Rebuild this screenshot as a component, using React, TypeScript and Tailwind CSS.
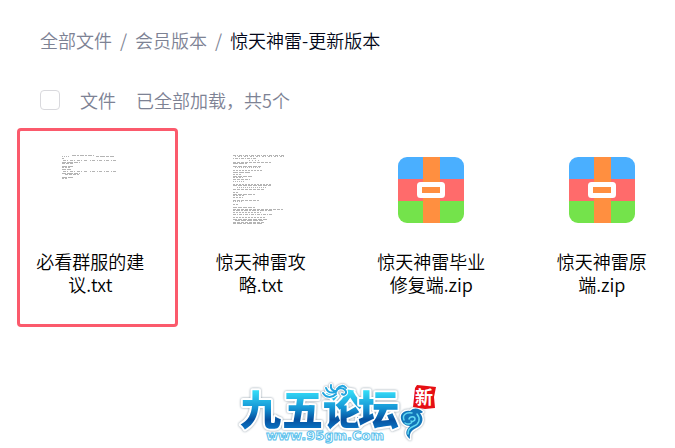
import { useId } from "react";

type Line = [x: number, y: number, width: number, dash: string];

type FileEntry = {
  name: string;
  kind: "txt" | "zip";
  lines?: Line[];
  highlighted?: boolean;
};

const shortNote: Line[] = [
  [0, 2, 8, "1 1"], [10, 1, 22, "4 1 2 1"], [34, 2, 18, "3 1 5 1"],
  [0, 4, 3, "2 1"],
  [1, 6, 24, "3 1 1 2"], [28, 6, 28, "1 1 3 2"],
  [0, 8, 18, "4 1 6 1"], [0, 9, 12, "3 1"],
  [0, 12, 11, "5 1"], [0, 13, 8, "2 1"], [0, 15, 9, "4 1"],
  [1, 17, 24, "3 1 1 2"], [28, 17, 28, "1 1 3 2"],
  [0, 19, 18, "4 1 6 1"], [3, 20, 14, "3 1"],
  [0, 23, 11, "5 1"], [0, 24, 6, "2 1"]
];

const guide: Line[] = [
  [0, 1, 51, "3 1 1 1"], [2, 2, 50, "1 2 2 1"], [0, 4, 24, "1 1 3 1"], [16, 6, 10, "1 2"],
  [0, 8, 38, "3 1"], [0, 9, 14, "5 1"], [0, 12, 28, "4 1"], [2, 13, 26, "1 1"],
  [0, 16, 30, "2 1"], [0, 18, 18, "5 1"], [0, 20, 9, "2 1"],
  [0, 22, 20, "4 1"], [0, 23, 10, "2 1"], [0, 25, 17, "3 1"], [0, 27, 12, "1 1"],
  [0, 30, 38, "2 1"], [0, 31, 38, "4 1"], [4, 33, 30, "1 1"], [0, 35, 32, "3 1"],
  [0, 38, 5, "2 1"], [0, 40, 22, "4 1"], [0, 41, 12, "2 1"], [0, 43, 10, "2 1"],
  [0, 46, 26, "3 1"], [0, 47, 10, "1 1"], [0, 50, 6, "2 1"],
  [0, 53, 22, "4 1"], [0, 55, 50, "3 1"], [0, 56, 40, "2 1 4 1"], [0, 58, 28, "2 1"],
  [0, 60, 40, "3 1 1 1"], [0, 63, 32, "2 1"], [0, 65, 34, "4 1"], [2, 66, 28, "5 1"],
  [0, 68, 32, "3 1"], [0, 69, 30, "3 1 5 1"]
];

const files: FileEntry[] = [
  { name: "必看群服的建议.txt", kind: "txt", lines: shortNote, highlighted: true },
  { name: "惊天神雷攻略.txt", kind: "txt", lines: guide },
  { name: "惊天神雷毕业修复端.zip", kind: "zip" },
  { name: "惊天神雷原端.zip", kind: "zip" }
];

function TextPreview({ lines }: { lines: Line[] }) {
  return (
    <svg viewBox="0 0 56 72" className="h-[72px] w-14" aria-hidden="true">
      {lines.map(([x, y, width, dash]) => (
        <path key={`${x}-${y}`} d={`M${x} ${y + 0.5}h${width}`} stroke="#b4b4b4" strokeDasharray={dash} />
      ))}
    </svg>
  );
}

function ZipIcon() {
  const clip = useId();

  return (
    <svg viewBox="0 0 66 66" className="size-[66px]" aria-hidden="true">
      <clipPath id={clip}>
        <rect width="66" height="66" rx="9" />
      </clipPath>
      <g clipPath={`url(#${clip})`}>
        <path fill="#4aafff" d="M0 0h66v22H0z" />
        <path fill="#ff6b6b" d="M0 22h66v22H0z" />
        <path fill="#74e34b" d="M0 44h66v22H0z" />
        <path fill="#ff8f40" d="M25 0h17v66H25z" />
      </g>
      <rect x="21.5" y="27.5" width="23" height="11" rx="1" fill="#ff8f40" stroke="#fff" strokeWidth="5" />
    </svg>
  );
}

function FileCard({ file }: { file: FileEntry }) {
  return (
    <li className="relative">
      {file.highlighted && (
        <span className="pointer-events-none absolute inset-y-0 left-0 -right-3.5 rounded border-3 border-[#fb5a6c]" />
      )}
      <a href="#" className="flex h-[199px] flex-col items-center pt-[26px] text-center">
        <span className="flex h-[72px] shrink-0 items-center">
          {file.kind === "zip" ? <ZipIcon /> : <TextPreview lines={file.lines ?? []} />}
        </span>
        <span className="mt-6 w-28 leading-[23px] break-all text-black">{file.name}</span>
      </a>
    </li>
  );
}

function ForumLogo() {
  return (
    <svg viewBox="0 -12 202 76" className="h-[76px] w-[202px]" role="img" aria-label="九五论坛 www.95gm.Com">
      <defs>
        <linearGradient id="water" gradientUnits="userSpaceOnUse" x1="0" y1="8" x2="0" y2="46">
          <stop offset="0" stopColor="#35dcf7" />
          <stop offset="0.45" stopColor="#1595d5" />
          <stop offset="0.75" stopColor="#06519f" />
          <stop offset="1" stopColor="#0a74c4" />
        </linearGradient>
      </defs>
      <g className="drop-shadow-[0_0_1px_#8a99a5]" strokeLinejoin="round">
        <text
          x="3 45 86 121"
          y="42"
          fontFamily='"Noto Sans CJK SC", sans-serif'
          fontWeight="900"
          fontSize="41"
          fill="url(#water)"
          stroke="#fff"
          strokeWidth="4"
          paintOrder="stroke"
        >
          九五论坛
        </text>
        <g fill="none" strokeLinecap="round">
          <path
            d="M86 10c3 5 9 5 13 1M89 5c2 5 6 5 9 4M94 2c-1 4 2 6 5 6M99 9c1-4 6-5 9-2 3 3-1 6-3 4M100 6c3-4 7-4 9-1"
            stroke="#fff"
            strokeWidth="4"
          />
          <path
            d="M86 10c3 5 9 5 13 1M89 5c2 5 6 5 9 4M94 2c-1 4 2 6 5 6M99 9c1-4 6-5 9-2 3 3-1 6-3 4M100 6c3-4 7-4 9-1"
            stroke="#1fa4df"
            strokeWidth="2"
          />
          <path
            d="M164 36c-1-5 3-9 9-8 4-4 9-3 13 1-1 1-2 1-3 1 4 5 3 11-2 14-5 3-9 4-8 12-5-4-5-8 0-13-5 0-8-3-9-7z"
            fill="#1276ba"
            stroke="#fff"
            strokeWidth="3"
            paintOrder="stroke"
          />
          <path
            d="M167 37c-2-5 2-8 8-7M172 36c1-3 6-3 6 0 0 2-3 3-4 2M180 31c4 5 2 10-3 12-5 2-6 4-6 8M168 40c3 2 6 1 7-1"
            stroke="#64d9f2"
            strokeWidth="1.5"
          />
        </g>
      </g>
      <text
        x="29"
        y="57"
        fontFamily='"DejaVu Sans", sans-serif'
        fontWeight="700"
        fontSize="13"
        fill="#fff"
        stroke="#58bfec"
        strokeWidth="1"
      >
        www.95gm.Com
      </text>
      <path d="M180 2l10 1 9 1-2 10 1 11-10 1-12-2 1-9 1-10z" fill="#e60f14" />
      <text x="178" y="21" fontFamily='"Noto Sans CJK SC", sans-serif' fontWeight="700" fontSize="18" fill="#fff">
        新
      </text>
    </svg>
  );
}

export default function App() {
  return (
    <main className='bg-white font-["Noto_Sans_CJK_SC",sans-serif] text-[18px] leading-6 font-[350] text-[#7d8294]'>
      <nav aria-label="路径" className="flex gap-2 px-10 pt-7">
        <a href="#">全部文件</a>
        <span>/</span>
        <a href="#">会员版本</a>
        <span>/</span>
        <a href="#" aria-current="page" className="text-[#03081a]">惊天神雷-更新版本</a>
      </nav>
      <div className="flex items-center px-10 pt-9">
        <input id="select-all" type="checkbox" className="size-5 appearance-none rounded border border-[#d9d9dd]" />
        <label htmlFor="select-all" className="pl-5">文件</label>
        <span className="pl-5">已全部加载，共5个</span>
      </div>
      <ul className="grid grid-cols-4 gap-6 pt-4 pl-[17px]">
        {files.map((file) => (
          <FileCard key={file.name} file={file} />
        ))}
      </ul>
      <footer className="flex justify-center pt-11">
        <ForumLogo />
      </footer>
    </main>
  );
}
